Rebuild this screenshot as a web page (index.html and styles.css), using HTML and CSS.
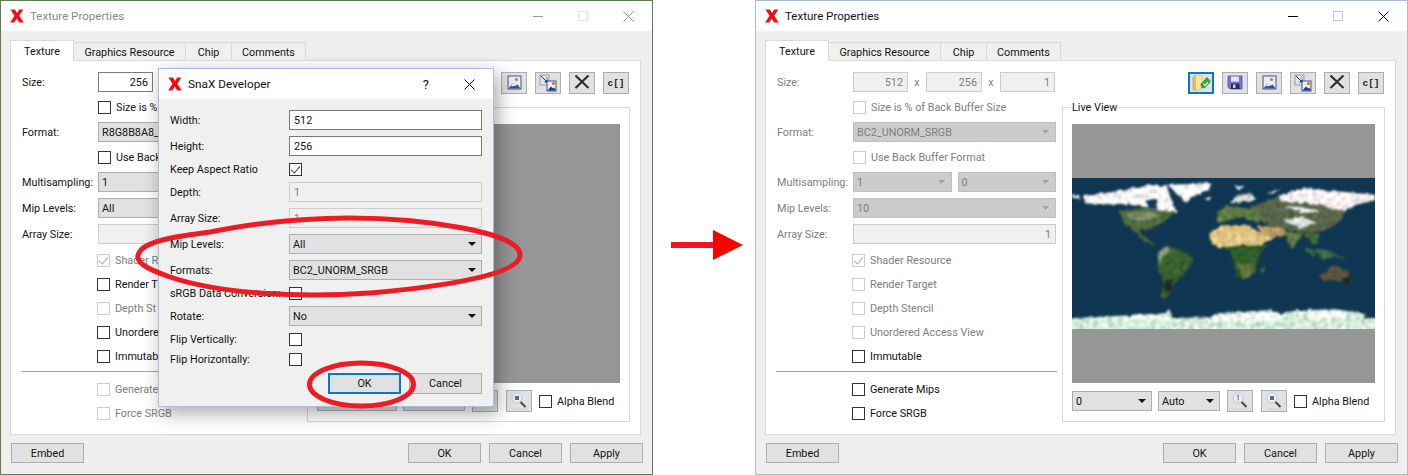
FILE: index.html
```html
<!DOCTYPE html>
<html lang="en">
<head>
  <meta charset="UTF-8">
  <title>Texture Properties</title>
  <link rel="stylesheet" href="styles.css">
</head>
<body>
  <svg class="defs" width="0" height="0">
    <defs>
      <symbol id="logo" viewBox="0 0 14 14">
        <path d="M0.5 0.5h4.4l2.2 3.6 2.2-3.6h4l-4 6.2 4.4 6.8h-4.5l-2.5-4-2.5 4h-4l4.3-6.8z" fill="#f40b12"/>
      </symbol>
      <symbol id="ic-open" viewBox="0 0 26 22">
        <path d="M5 5l3-2 6 1.500v11l-6 3.500-3-1.500z" fill="#dfbd62" stroke="#b89a4c" stroke-width=".6"/>
        <path d="M8 3l6 1.500v11l-6 3.500z" fill="#f6e6a0"/>
        <path d="M12.500 12l6.500-7 4 4.500-6.500 7-3.500-1z" fill="#2fa336"/>
        <path d="M15.500 11.500l1.500 2 3-3.500" stroke="#dff5d8" stroke-width="1.200" fill="none"/>
      </symbol>
      <symbol id="ic-save" viewBox="0 0 26 22">
        <path d="M6 4h14v13H8l-2-2z" fill="#7474dc" stroke="#45459a" stroke-width=".7"/>
        <rect x="9" y="4.500" width="8" height="5" fill="#e6e6f6"/>
        <rect x="9" y="11.500" width="8.500" height="5.500" fill="#2c2c50"/>
        <rect x="11" y="12.500" width="2.500" height="3.500" fill="#d0d0e0"/>
      </symbol>
      <symbol id="ic-image" viewBox="0 0 26 22">
        <rect x="7" y="4" width="13" height="13" fill="#e8eef8" stroke="#1e2f6a" stroke-width=".8"/>
        <circle cx="15.500" cy="7.500" r="1.600" fill="#ef6a34"/>
        <path d="M7.500 16.500l4.500-5.500 3 2.500 1.500-1 3 4z" fill="#3a4f85"/>
        <path d="M12 11l3 2.500-5 1z" fill="#fff"/>
      </symbol>
      <symbol id="ic-convert" viewBox="0 0 26 22">
        <rect x="5" y="3" width="9" height="10" fill="#dde6f3" stroke="#7a8db0" stroke-width=".8"/>
        <circle cx="12" cy="6" r="1.500" fill="#efb08a"/>
        <rect x="12" y="9" width="9" height="10" fill="#e8eef8" stroke="#1e2f6a" stroke-width=".8"/>
        <circle cx="18.500" cy="11.500" r="1.500" fill="#ef5a24"/>
        <path d="M12.500 18.500l3.500-4 2 2 1-1 2 3z" fill="#24396f"/>
        <path d="M6 4l6 6" stroke="#24396f" stroke-width="1"/>
        <path d="M9 10.500h3.500v-3.500z" fill="#24396f"/>
      </symbol>
      <symbol id="ic-delete" viewBox="0 0 26 22">
        <path d="M6.500 3.500l13 12.500M19.500 3.500l-13 12.500" stroke="#2e2e2e" stroke-width="2.200" fill="none"/>
      </symbol>
      <symbol id="ic-zoom1" viewBox="0 0 26 22">
        <circle cx="11" cy="8" r="5" fill="#e8eef4" stroke="#c0c8d0"/>
        <path d="M9.800 6l1.400-1v5.500" stroke="#5a6a88" stroke-width=".9" fill="none"/>
        <path d="M14.500 12l5 5" stroke="#444" stroke-width="2"/>
        <path d="M7 19h13" stroke="#cfcfcf"/>
      </symbol>
      <symbol id="ic-zoom" viewBox="0 0 26 22">
        <circle cx="11" cy="8" r="5" fill="#e8eef4" stroke="#c0c8d0"/>
        <rect x="9" y="6" width="4" height="4" fill="#5a6a88"/>
        <path d="M14.500 12l5 5" stroke="#444" stroke-width="2"/>
        <path d="M7 19h13" stroke="#cfcfcf"/>
      </symbol>
    </defs>
  </svg>

  <!-- window before the change, with the resize dialog over it -->
  <div class="window window-old">
    <div class="titlebar">
      <svg class="logo"><use href="#logo"/></svg>
      <span class="title">Texture Properties</span>
      <div class="win-controls">
        <svg width="10" height="10" class="ctl-min"><path d="M0 5.500h10"/></svg>
        <svg width="10" height="10" class="ctl-max"><rect x=".5" y=".5" width="9" height="9"/></svg>
        <svg width="11" height="11" class="ctl-close"><path d="M.5 .5l10 10M10.500 .5l-10 10"/></svg>
      </div>
    </div>
    <div class="tabs">
      <div class="tab tab-active">Texture</div>
      <div class="tab tab-gfx">Graphics Resource</div>
      <div class="tab tab-chip">Chip</div>
      <div class="tab tab-comments">Comments</div>
    </div>
    <div class="pane">
      <div class="form">
        <div class="row tight">
          <span class="label">Size:</span>
          <div class="input num">256</div>
        </div>
        <div class="check-row tight">
          <span class="box"></span><span>Size is %</span>
        </div>
        <div class="row tight">
          <span class="label">Format:</span>
          <div class="select grow">R8G8B8A8_<i></i></div>
        </div>
        <div class="check-row tight">
          <span class="box"></span><span>Use Back</span>
        </div>
        <div class="row">
          <span class="label">Multisampling:</span>
          <div class="select grow">1<i></i></div>
        </div>
        <div class="row">
          <span class="label">Mip Levels:</span>
          <div class="select grow">All<i></i></div>
        </div>
        <div class="row last">
          <span class="label">Array Size:</span>
          <div class="input off num grow"></div>
        </div>
        <div class="check-row off"><span class="box checked"></span><span>Shader R</span></div>
        <div class="check-row"><span class="box"></span><span>Render T</span></div>
        <div class="check-row off"><span class="box"></span><span>Depth St</span></div>
        <div class="check-row"><span class="box"></span><span>Unordere</span></div>
        <div class="check-row"><span class="box"></span><span>Immutab</span></div>
        <div class="sep"></div>
        <div class="check-row off"><span class="box"></span><span>Generate</span></div>
        <div class="check-row off"><span class="box"></span><span>Force SRGB</span></div>
      </div>
      <div class="side">
        <div class="toolbar">
          <div class="icon-btn"><svg><use href="#ic-image"/></svg></div>
          <div class="icon-btn"><svg><use href="#ic-convert"/></svg></div>
          <div class="icon-btn"><svg><use href="#ic-delete"/></svg></div>
          <div class="icon-btn code">c[]</div>
        </div>
        <div class="group">
          <div class="preview"></div>
          <div class="preview-bar">
            <div class="select sel-mip"><i></i></div>
            <div class="select sel-zoom"><i></i></div>
            <div class="icon-btn"></div>
            <div class="icon-btn"><svg><use href="#ic-zoom"/></svg></div>
            <div class="check-row"><span class="box"></span><span>Alpha Blend</span></div>
          </div>
        </div>
      </div>
    </div>
    <div class="footer">
      <div class="btn">Embed</div>
      <div class="footer-right">
        <div class="btn">OK</div>
        <div class="btn">Cancel</div>
        <div class="btn">Apply</div>
      </div>
    </div>
  </div>

  <div class="dialog">
    <div class="titlebar dialog-title">
      <svg class="logo"><use href="#logo"/></svg>
      <span class="title">SnaX Developer</span>
      <span class="help">?</span>
      <svg class="dialog-close" width="11" height="11"><path d="M.5 .5l10 10M10.500 .5l-10 10"/></svg>
    </div>
    <div class="dialog-form">
      <div class="d-row"><span class="d-label">Width:</span><div class="input grow">512</div></div>
      <div class="d-row"><span class="d-label">Height:</span><div class="input grow">256</div></div>
      <div class="d-row d-check"><span class="d-label">Keep Aspect Ratio</span><span class="box checked"></span></div>
      <div class="d-row"><span class="d-label">Depth:</span><div class="input off grow">1</div></div>
      <div class="d-row"><span class="d-label">Array Size:</span><div class="input off grow">1</div></div>
      <div class="d-row"><span class="d-label">Mip Levels:</span><div class="select grow">All<i></i></div></div>
      <div class="d-row"><span class="d-label">Formats:</span><div class="select grow">BC2_UNORM_SRGB<i></i></div></div>
      <div class="d-row d-check"><span class="d-label">sRGB Data Conversion:</span><span class="box"></span></div>
      <div class="d-row"><span class="d-label">Rotate:</span><div class="select grow">No<i></i></div></div>
      <div class="d-row d-check flip"><span class="d-label">Flip Vertically:</span><span class="box"></span></div>
      <div class="d-row d-check flip"><span class="d-label">Flip Horizontally:</span><span class="box"></span></div>
      <div class="dialog-buttons">
        <div class="btn focus">OK</div>
        <div class="btn">Cancel</div>
      </div>
    </div>
  </div>

  <!-- window after the change -->
  <div class="window window-new">
    <div class="titlebar">
      <svg class="logo"><use href="#logo"/></svg>
      <span class="title">Texture Properties</span>
      <div class="win-controls">
        <svg width="10" height="10" class="ctl-min"><path d="M0 5.500h10"/></svg>
        <svg width="10" height="10" class="ctl-max"><rect x=".5" y=".5" width="9" height="9"/></svg>
        <svg width="11" height="11" class="ctl-close"><path d="M.5 .5l10 10M10.500 .5l-10 10"/></svg>
      </div>
    </div>
    <div class="tabs">
      <div class="tab tab-active">Texture</div>
      <div class="tab tab-gfx">Graphics Resource</div>
      <div class="tab tab-chip">Chip</div>
      <div class="tab tab-comments">Comments</div>
    </div>
    <div class="pane">
      <div class="form">
        <div class="row tight off-text">
          <span class="label">Size:</span>
          <div class="input off num">512</div><span class="times">x</span>
          <div class="input off num dim2">256</div><span class="times">x</span>
          <div class="input off num">1</div>
        </div>
        <div class="check-row tight off">
          <span class="box"></span><span>Size is % of Back Buffer Size</span>
        </div>
        <div class="row tight off-text">
          <span class="label">Format:</span>
          <div class="select off grow">BC2_UNORM_SRGB<i></i></div>
        </div>
        <div class="check-row tight off">
          <span class="box"></span><span>Use Back Buffer Format</span>
        </div>
        <div class="row off-text">
          <span class="label">Multisampling:</span>
          <div class="select off grow">1<i></i></div>
          <div class="select off grow">0<i></i></div>
        </div>
        <div class="row off-text">
          <span class="label">Mip Levels:</span>
          <div class="select off grow">10<i></i></div>
        </div>
        <div class="row last off-text">
          <span class="label">Array Size:</span>
          <div class="input off num grow">1</div>
        </div>
        <div class="check-row off"><span class="box checked"></span><span>Shader Resource</span></div>
        <div class="check-row off"><span class="box"></span><span>Render Target</span></div>
        <div class="check-row off"><span class="box"></span><span>Depth Stencil</span></div>
        <div class="check-row off"><span class="box"></span><span>Unordered Access View</span></div>
        <div class="check-row"><span class="box"></span><span>Immutable</span></div>
        <div class="sep"></div>
        <div class="check-row"><span class="box"></span><span>Generate Mips</span></div>
        <div class="check-row"><span class="box"></span><span>Force SRGB</span></div>
      </div>
      <div class="side">
        <div class="toolbar">
          <div class="icon-btn focus"><svg><use href="#ic-open"/></svg></div>
          <div class="icon-btn"><svg><use href="#ic-save"/></svg></div>
          <div class="icon-btn"><svg><use href="#ic-image"/></svg></div>
          <div class="icon-btn"><svg><use href="#ic-convert"/></svg></div>
          <div class="icon-btn"><svg><use href="#ic-delete"/></svg></div>
          <div class="icon-btn code">c[]</div>
        </div>
        <div class="group">
          <span class="legend">Live View</span>
          <div class="preview">
            <svg class="map" viewBox="6 24 909 453" preserveAspectRatio="none">
              <defs>
                <filter id="rough" filterUnits="userSpaceOnUse" x="-30" y="0" width="980" height="520" color-interpolation-filters="sRGB">
                  <feTurbulence type="fractalNoise" baseFrequency="0.07" numOctaves="3" seed="4" result="n"/>
                  <feDisplacementMap in="SourceGraphic" in2="n" scale="12" xChannelSelector="R" yChannelSelector="G" result="d"/>
                  <feColorMatrix in="n" type="matrix" values="1 0 0 0 0 1 0 0 0 0 1 0 0 0 0 0 0 0 0 1" result="g"/>
                  <feComposite in="d" in2="g" operator="arithmetic" k1="0.600" k2="0.720"/>
                  <feGaussianBlur stdDeviation="2.600"/>
                </filter>
              </defs>
              <rect x="6" y="24" width="909" height="453" fill="#0f3753"/>
              <g filter="url(#rough)">
                <!-- land masses, in order: green and brown first, then ice -->
                <path fill="#4d6a3c" d="M150 120L250 112 318 128 300 140 275 160 245 175 225 182 212 176 210 195 240 212 256 228 245 226 212 206 190 180 160 160z"/>
                <path fill="#7d8a68" d="M170 130L240 125 270 135 240 150 190 150z"/>
                <path fill="#38602f" d="M262 258L290 226 330 240 372 266 345 310 310 345 298 372 285 388 272 378 280 345 278 325 262 290z"/>
                <path fill="#1c2c1f" d="M282 330L310 330 302 362 284 368z"/>
                <path fill="#8b9c82" d="M262 250L290 228 300 240 275 265 268 290z"/>
                <path fill="#dcc080" d="M418 190L460 165 530 165 556 178 610 205 585 218 565 236 520 224 480 232 440 232 420 212z"/>
                <path fill="#2f5c28" d="M440 232L590 224 562 270 558 310 520 332 498 315 490 270 478 240z"/>
                <path fill="#59703a" d="M500 280L555 280 552 310 520 330z"/>
                <path fill="#4f7040" d="M572 300L586 284 584 306 574 312z"/>
                <path fill="#5c7a45" d="M440 128L470 108 560 118 590 150 560 156 510 140 480 150 445 160z"/>
                <path fill="#566448" d="M540 110L630 80 830 100 815 150 770 180 720 190 700 185 640 178 590 165z"/>
                <path fill="#b69a66" d="M560 165L640 175 650 195 610 205 580 195z"/>
                <path fill="#637845" d="M642 185L700 188 668 236 655 215z"/>
                <path fill="#3f6a3a" d="M700 190L750 190 742 225 722 215z"/>
                <path fill="#3d6a4a" d="M702 236L718 232 760 268 790 262 838 270 800 255 770 240 742 234 730 262z"/>
                <path fill="#5a5040" d="M748 318L790 284 835 304 844 340 805 332 762 332z"/>
                <path fill="#1e2a22" d="M810 325L844 320 836 346z"/>
                <path fill="#f6f2f2" d="M40 75L100 70 150 62 232 44 290 48 300 78 320 126 270 122 232 112 160 102 70 104 45 98z"/>
                <path fill="#0f3753" d="M226 92L256 86 262 118 238 114z"/>
                <path fill="#f4fafc" d="M292 44L424 40 416 60 372 78 346 98 326 74 306 56z"/>
                <path fill="#f0f0f0" d="M6 72L26 78 30 86 6 84z"/>
                <path fill="#d8ddd6" d="M476 100L500 78 540 70 560 88 530 95z"/>
                <path fill="#f6eeee" d="M620 78L700 54 800 64 915 74 915 90 860 104 825 124 790 116 720 100 640 96z"/>
                <path fill="#dfe4df" d="M640 108L700 112 750 125 700 130z"/>
                <path fill="#d8dfd8" d="M640 150L700 140 740 160 690 176z"/>
                <path fill="#ddd" d="M490 48L524 48 510 58z"/>
                <path fill="#ddd" d="M402 84L424 84 416 92z"/>
                <path fill="#c8d2c8" d="M592 70L632 56 608 72z"/>
                <path fill="#cfe8d6" d="M-20 445L100 440 200 434 290 430 298 416 306 444 420 442 440 430 600 420 634 432 680 420 800 418 888 432 880 444 940 446 940 500 -20 500z"/>
                <path fill="#eef7ee" d="M200 436L290 434 300 450 120 450zM440 436L620 426 640 444 560 456 430 452zM680 424L800 424 880 438 720 448z"/>
              </g>
            </svg>
          </div>
          <div class="preview-bar">
            <div class="select sel-mip">0<i></i></div>
            <div class="select sel-zoom">Auto<i></i></div>
            <div class="icon-btn"><svg><use href="#ic-zoom1"/></svg></div>
            <div class="icon-btn"><svg><use href="#ic-zoom"/></svg></div>
            <div class="check-row"><span class="box"></span><span>Alpha Blend</span></div>
          </div>
        </div>
      </div>
    </div>
    <div class="footer">
      <div class="btn">Embed</div>
      <div class="footer-right">
        <div class="btn">OK</div>
        <div class="btn">Cancel</div>
        <div class="btn">Apply</div>
      </div>
    </div>
  </div>

  <!-- hand drawn marks on top of the screenshot -->
  <svg class="marks" width="1408" height="475">
    <path class="ring" d="M210 232C260 222 310 218 350 218 420 218 524 232 520 256 518 275 440 287 370 293 300 298 220 294 170 277 150 270 130 262 141 250 150 240 180 236 210 232Z"/>
    <ellipse class="ring" cx="361.500" cy="384.500" rx="52" ry="21.500"/>
    <rect x="671" y="242" width="43" height="6" fill="#f4141c"/>
    <path d="M713 230L743 245 713 260Z" fill="#fe0000"/>
  </svg>
</body>
</html>
```

FILE: styles.css
```css
body {
  margin: 0;
  width: 1408px;
  height: 475px;
  position: relative;
  overflow: hidden;
  background: #fff;
  font-family: 'Roboto', 'Liberation Sans', sans-serif;
  font-size: 10.8px;
  color: #111;
}

.defs {
  position: absolute;
}

/* windows */
.window {
  position: absolute;
  top: 0;
  width: 653px;
  height: 475px;
  box-sizing: border-box;
  border: 1px solid #a9bcd6;
  background: #efefef;
  display: flex;
  flex-direction: column;
}

.window-old {
  left: 0;
  border-color: #5b7f4a;
}

.window-new {
  left: 755px;
}

.titlebar {
  height: 30px;
  flex: none;
  background: #fff;
  display: flex;
  align-items: center;
  padding-left: 9px;
}

.logo {
  width: 14px;
  height: 14px;
  flex: none;
}

.title {
  margin-left: 6px;
  font-size: 11.55px;
}

.window-old .title {
  color: #8a8a8a;
}

.win-controls {
  margin-left: auto;
  margin-right: 18px;
  display: flex;
  align-items: center;
  gap: 35px;
}

.win-controls svg {
  display: block;
  fill: none;
  stroke: #000;
}

.win-controls .ctl-max {
  stroke: #c8c8c8;
}

.window-old .ctl-min,
.window-old .ctl-close {
  stroke: #999;
}

.window-old .ctl-max {
  stroke: #e2e2e2;
}

/* tabs */
.tabs {
  height: 30px;
  flex: none;
  padding-left: 9px;
  display: flex;
  align-items: flex-end;
  position: relative;
  z-index: 1;
  margin-bottom: -1px;
}

.tab {
  height: 19px;
  box-sizing: border-box;
  border: 1px solid #d9d9d9;
  border-left: 0;
  padding-top: 1px;
  display: flex;
  align-items: center;
  justify-content: center;
  background: #f0f0f0;
}

.tab-active {
  width: 64px;
  height: 21px;
  border-left: 1px solid #d9d9d9;
  border-bottom: 0;
  padding-top: 0;
  background: #fff;
}

.tab-gfx {
  width: 112px;
}

.tab-chip {
  width: 46px;
}

.tab-comments {
  width: 74px;
}

.pane {
  margin-left: 9px;
  width: 631px;
  height: 375px;
  flex: none;
  box-sizing: border-box;
  border: 1px solid #d9d9d9;
  background: #fff;
  display: flex;
  padding: 11px 10px 0 11px;
}

/* left column of the form */
.form {
  width: 279px;
  flex: none;
  display: flex;
  flex-direction: column;
}

.form .check-row {
  margin-left: 75px;
}

.form .check-row.tight {
  margin-left: 76px;
  margin-bottom: 3px;
}

.row {
  height: 20px;
  flex: none;
  display: flex;
  align-items: center;
  margin-bottom: 6px;
}

.row.tight {
  margin-bottom: 3px;
}

.row.last {
  margin-bottom: 4px;
}

.label {
  width: 76px;
  flex: none;
}

.off-text .label,
.off-text .times {
  color: #7d7d7d;
}

.times {
  width: 18px;
  flex: none;
  text-align: center;
}

.grow {
  flex: 1;
}

.row .select + .select {
  margin-left: 6px;
}

.input {
  height: 20px;
  width: 55px;
  flex: none;
  box-sizing: border-box;
  border: 1px solid #7a7a7a;
  background: #fff;
  padding: 0 4px;
  display: flex;
  align-items: center;
}

.input.grow {
  flex: 1;
}

.input.num {
  justify-content: flex-end;
}

.input.off {
  border-color: #ccc;
  background: #f0f0f0;
  color: #7d7d7d;
}

.input.dim2 {
  width: 56px;
}

.select {
  height: 20px;
  min-width: 0;
  box-sizing: border-box;
  border: 1px solid #adadad;
  background: #e1e1e1;
  padding-left: 3px;
  display: flex;
  align-items: center;
  position: relative;
  white-space: nowrap;
  overflow: hidden;
}

.select i {
  margin-left: auto;
  margin-right: 5px;
  flex: none;
  width: 0;
  height: 0;
  border-left: 4px solid transparent;
  border-right: 4px solid transparent;
  border-top: 4px solid #111;
}

.select.off {
  background: #ccc;
  border-color: #bfbfbf;
  color: #7d7d7d;
}

.select.off i {
  border-top-color: #a4a4a4;
  filter: drop-shadow(1px 0 0 #f4f4f4);
}

.check-row {
  height: 24px;
  flex: none;
  display: flex;
  align-items: center;
  gap: 5px;
}

.box {
  width: 13px;
  height: 13px;
  flex: none;
  box-sizing: border-box;
  border: 1px solid #333;
  background: #fff;
  position: relative;
}

.box.checked::after {
  content: '';
  position: absolute;
  left: 3px;
  top: 0;
  width: 4px;
  height: 8px;
  border-right: 1px solid #444;
  border-bottom: 1px solid #444;
  transform: rotate(40deg);
}

.check-row.off {
  color: #7d7d7d;
}

.check-row.off .box {
  border-color: #ccc;
}

.check-row.off .box.checked::after {
  border-color: #aaa;
}

.sep {
  height: 1px;
  flex: none;
  margin: 3px -1px 5px;
  background: #a5a5a5;
}

/* right column */
.side {
  margin-left: 6px;
  width: 323px;
  flex: none;
}

.toolbar {
  height: 22px;
  display: flex;
  justify-content: flex-end;
  gap: 8px;
  margin-right: 1px;
  margin-bottom: 13px;
}

.icon-btn {
  width: 26px;
  height: 22px;
  flex: none;
  box-sizing: border-box;
  border: 1px solid #adadad;
  background: #e1e1e1;
  display: flex;
  align-items: center;
  justify-content: center;
}

.icon-btn svg {
  width: 26px;
  height: 22px;
  flex: none;
}

.icon-btn.focus {
  border: 2px solid #0078d7;
}

.icon-btn.code {
  font-family: 'Liberation Mono', monospace;
  font-weight: bold;
  font-size: 9.5px;
  color: #222;
}

.group {
  height: 315px;
  box-sizing: border-box;
  border: 1px solid #d9d9d9;
  padding: 16px 9px 0;
  position: relative;
}

.legend {
  position: absolute;
  left: 8px;
  top: -7px;
  padding: 0 1px;
  background: #fff;
}

.preview {
  height: 259px;
  background: #969696;
  display: flex;
  align-items: center;
}

.map {
  width: 303px;
  height: 151px;
  display: block;
}

.preview-bar {
  margin-top: 7px;
  height: 22px;
  display: flex;
  align-items: center;
}

.sel-mip {
  width: 80px;
  flex: none;
}

.sel-zoom {
  width: 62px;
  flex: none;
  margin: 0 7px 0 6px;
}

.preview-bar .icon-btn + .icon-btn {
  margin-left: 8px;
}

.preview-bar .check-row {
  margin-left: 7px;
}

/* bottom buttons */
.footer {
  margin-top: 8px;
  padding: 0 9px 0 10px;
  display: flex;
  justify-content: space-between;
}

.footer .btn {
  padding-top: 1px;
}

.footer-right {
  display: flex;
  gap: 8px;
}

.btn {
  width: 73px;
  height: 20px;
  box-sizing: border-box;
  border: 1px solid #adadad;
  background: #e1e1e1;
  display: flex;
  align-items: center;
  justify-content: center;
}

/* dialog over the first window */
.dialog {
  position: absolute;
  left: 158px;
  top: 68px;
  width: 336px;
  height: 339px;
  box-sizing: border-box;
  border: 1px solid #a9c0dc;
  background: #f0f0f0;
  box-shadow: 4px 6px 18px rgba(0, 0, 0, 0.35);
}

.dialog-title {
  height: 30px;
}

.dialog-title .title {
  font-size: 11.8px;
}

.help {
  margin-left: auto;
  margin-right: 1px;
  font-size: 13px;
}

.dialog-close {
  margin: 0 18px 0 34px;
  fill: none;
  stroke: #000;
}

.dialog-form {
  padding: 11px 11px 0;
}

.d-row {
  height: 20px;
  margin-bottom: 6px;
  display: flex;
  align-items: center;
}

.d-label {
  width: 119px;
  flex: none;
  white-space: nowrap;
}

.d-check {
  margin: -3px 0 3px;
}

.d-row.flip {
  margin-bottom: 0;
}

.flip + .flip {
  margin-top: 0;
}

.dialog-buttons {
  margin-top: 4px;
  display: flex;
  justify-content: flex-end;
  gap: 8px;
}

.dialog-buttons .btn {
  height: 21px;
}

.btn.focus {
  border: 2px solid #0078d7;
}

.marks {
  position: absolute;
  left: 0;
  top: 0;
  pointer-events: none;
}

.ring {
  fill: none;
  stroke: #ed1c24;
  stroke-width: 5;
}
```
